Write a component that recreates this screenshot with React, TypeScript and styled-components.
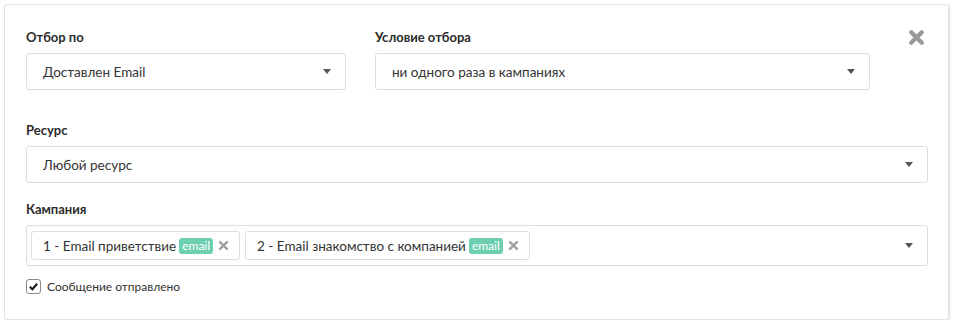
import React, { FC } from "react";
import styled, { createGlobalStyle } from "styled-components";

const GlobalStyle = createGlobalStyle`
  body {
    margin: 0;
    background: #ffffff;
    font-family: Lato, "Open Sans", sans-serif;
    color: #333333;
  }
`;

const Card = styled.div`
  margin: 4px 6px 0 4px;
  width: 945px;
  height: 316px;
  box-sizing: border-box;
  border: 1px solid #e3e3e3;
  border-radius: 3px;
  box-shadow: 1px 1px 2px rgba(0, 0, 0, 0.12);
  background: #fff;
  padding: 23px 20px 0 21px;
`;

const TopRow = styled.div`
  display: grid;
  grid-template-columns: 320px 495px 1fr;
  column-gap: 29px;
`;

const Field = styled.div<{ top?: number }>`
  display: flex;
  flex-direction: column;
  margin-top: ${(p) => p.top ?? 0}px;
`;

const Label = styled.label`
  font-size: 13px;
  font-weight: 700;
  line-height: 18px;
  color: #2b2b2b;
  margin-bottom: 7px;
`;

const Select = styled.div<{ tall?: boolean }>`
  display: flex;
  align-items: center;
  box-sizing: border-box;
  height: ${(p) => (p.tall ? 41 : 37)}px;
  border: 1px solid #dedede;
  border-radius: 3px;
  padding: ${(p) => (p.tall ? "0 14px 0 4px" : "0 14px 0 16px")};
  font-size: 13.5px;
  color: #333;
`;

const Value = styled.span`
  flex: 1;
`;

const Caret = styled.span`
  width: 0;
  height: 0;
  border-left: 4.5px solid transparent;
  border-right: 4.5px solid transparent;
  border-top: 5px solid #555;
`;

const CloseButton = styled.button`
  all: unset;
  justify-self: end;
  margin-right: 3px;
  margin-top: 1px;
  width: 17px;
  height: 17px;
  cursor: pointer;
  color: #999;
`;

const Tags = styled.div`
  flex: 1;
  display: flex;
  gap: 5px;
`;

const Tag = styled.div`
  display: flex;
  align-items: center;
  height: 29px;
  box-sizing: border-box;
  border: 1px solid #dedede;
  border-radius: 3px;
  padding: 0 10px 0 11px;
  font-size: 13.5px;
  color: #333;
`;

const Badge = styled.span`
  background: #6ccfb0;
  color: #fff;
  font-size: 12px;
  line-height: 16px;
  padding: 0 3px;
  border-radius: 3px;
  margin-left: 3px;
`;

const TagRemove = styled.span`
  display: inline-flex;
  margin-left: 5px;
  color: #a0a0a0;
`;

const CheckRow = styled.label`
  display: flex;
  align-items: center;
  gap: 6px;
  margin-top: 13px;
  font-size: 12px;
  color: #333;
`;

const CheckBox = styled.span`
  display: inline-flex;
  align-items: center;
  justify-content: center;
  width: 15px;
  height: 15px;
  box-sizing: border-box;
  border: 1px solid #8a8a8a;
  border-radius: 3px;
`;

const Times: FC<{ size: number; weight: number }> = ({ size, weight }) => (
  <svg width={size} height={size} viewBox="0 0 16 16">
    <path
      d="M3 3 L13 13 M13 3 L3 13"
      stroke="currentColor"
      strokeWidth={weight}
      strokeLinecap="round"
    />
  </svg>
);

const campaigns = [
  { id: 1, name: "Email приветствие" },
  { id: 2, name: "Email знакомство с компанией" },
];

export default function App() {
  return (
    <>
      <GlobalStyle />
      <Card>
        <TopRow>
          <Field>
            <Label>Отбор по</Label>
            <Select>
              <Value>Доставлен Email</Value>
              <Caret />
            </Select>
          </Field>
          <Field>
            <Label>Условие отбора</Label>
            <Select>
              <Value>ни одного раза в кампаниях</Value>
              <Caret />
            </Select>
          </Field>
          <CloseButton>
            <Times size={17} weight={4} />
          </CloseButton>
        </TopRow>
        <Field top={31}>
          <Label>Ресурс</Label>
          <Select>
            <Value>Любой ресурс</Value>
            <Caret />
          </Select>
        </Field>
        <Field top={17}>
          <Label>Кампания</Label>
          <Select tall>
            <Tags>
              {campaigns.map((c) => (
                <Tag key={c.id}>
                  {c.id} - {c.name}
                  <Badge>email</Badge>
                  <TagRemove>
                    <Times size={11} weight={3.5} />
                  </TagRemove>
                </Tag>
              ))}
            </Tags>
            <Caret />
          </Select>
        </Field>
        <CheckRow>
          <CheckBox>
            <svg width="11" height="11" viewBox="0 0 12 12">
              <path
                d="M2 6.2 L4.8 9 L10 3"
                fill="none"
                stroke="#111"
                strokeWidth="2.2"
              />
            </svg>
          </CheckBox>
          Сообщение отправлено
        </CheckRow>
      </Card>
    </>
  );
}
